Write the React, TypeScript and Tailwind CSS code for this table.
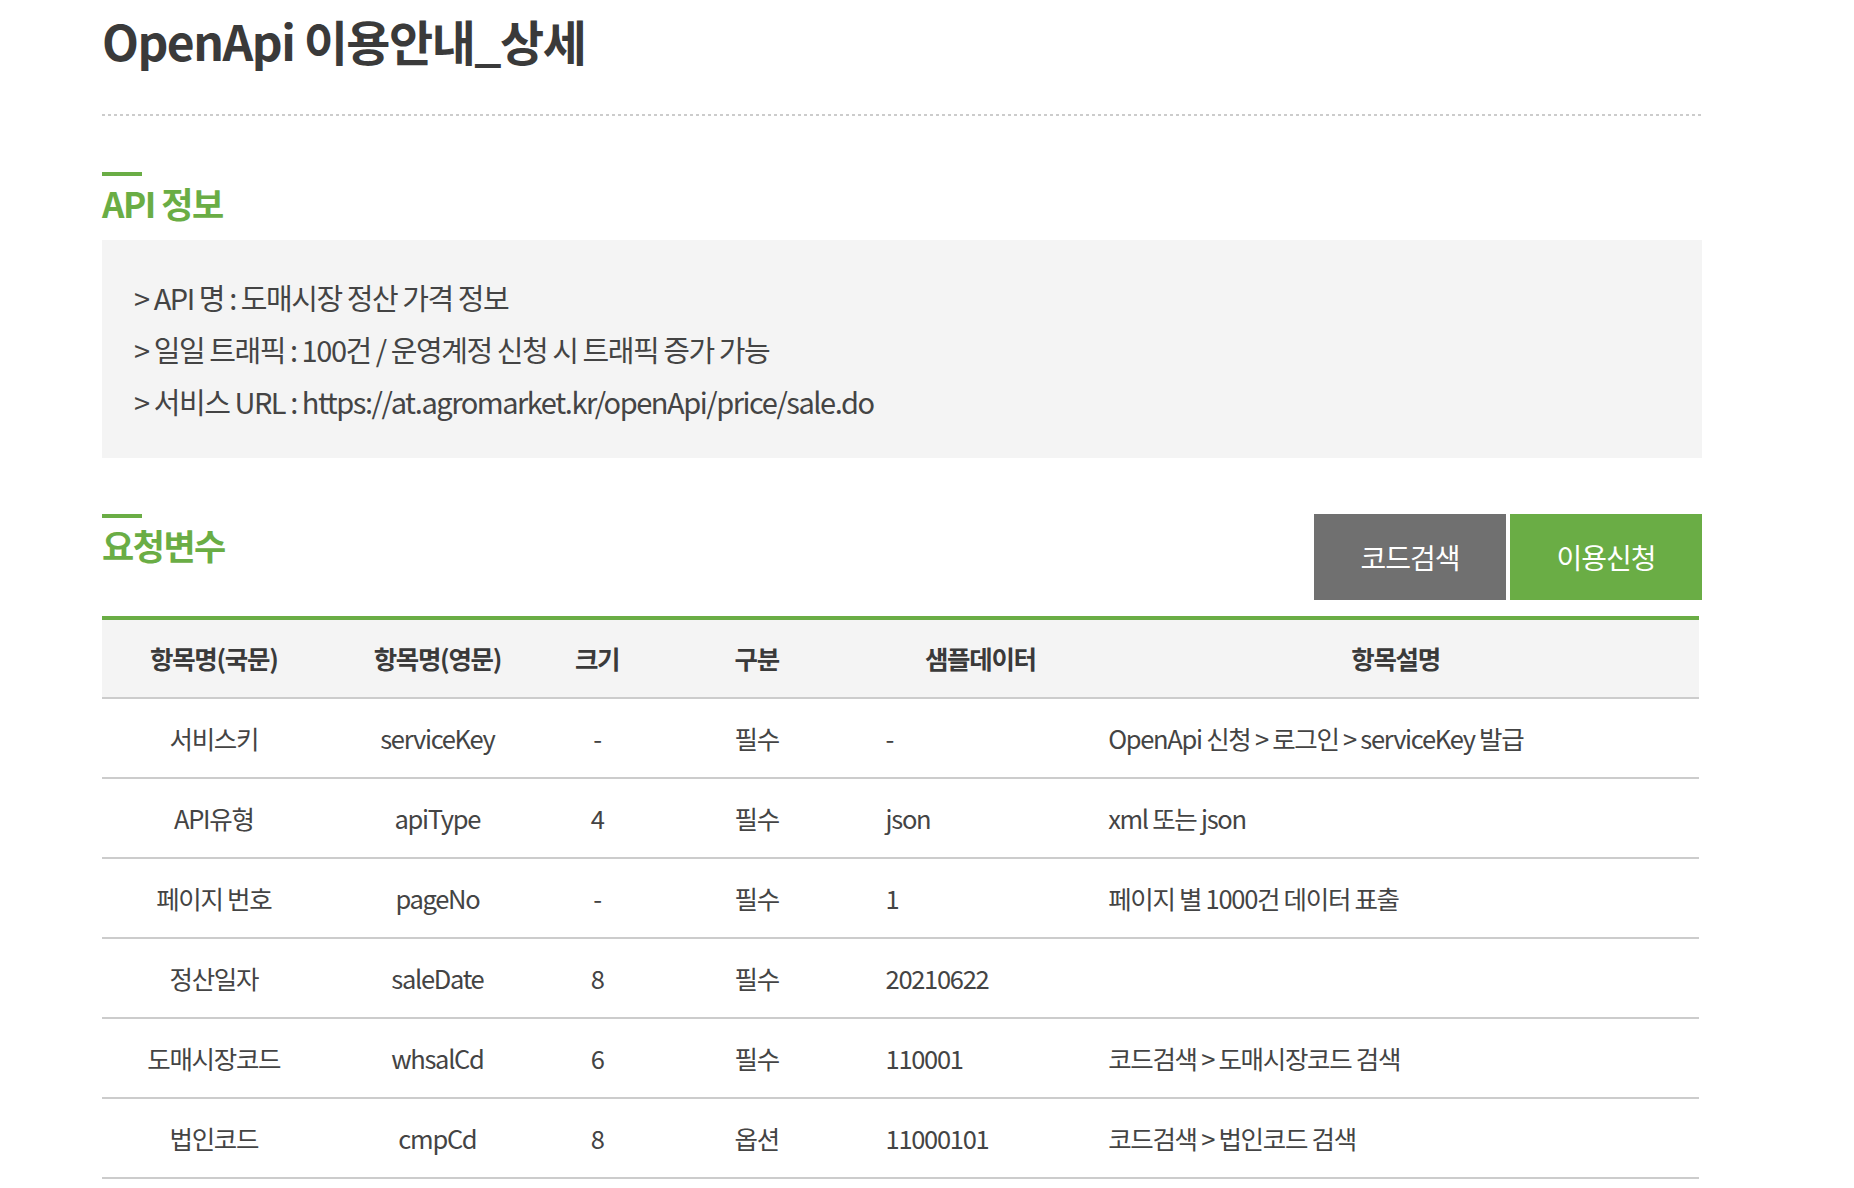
import React from "react";

const rows = [
  ["서비스키", "serviceKey", "-", "필수", "-", "OpenApi 신청 > 로그인 > serviceKey 발급"],
  ["API유형", "apiType", "4", "필수", "json", "xml 또는 json"],
  ["페이지 번호", "pageNo", "-", "필수", "1", "페이지 별 1000건 데이터 표출"],
  ["정산일자", "saleDate", "8", "필수", "20210622", ""],
  ["도매시장코드", "whsalCd", "6", "필수", "110001", "코드검색 > 도매시장코드 검색"],
  ["법인코드", "cmpCd", "8", "옵션", "11000101", "코드검색 > 법인코드 검색"],
];

function SectionTitle({ children }: { children: React.ReactNode }) {
  return (
    <div>
      <div className="w-[40px] h-[4px] bg-[#6aad45]" />
      <h3 className="mt-[7px] text-[35px] leading-[40px] font-bold text-[#6aad45] tracking-[-1.5px]">{children}</h3>
    </div>
  );
}

export default function App() {
  return (
    <div
      className="min-h-[1188px] bg-white text-[#333]"
      style={{ fontFamily: '"Noto Sans CJK KR", "Noto Sans", sans-serif' }}
    >
      <div className="ml-[102px] w-[1600px]">
        <div className="pt-[10px] pb-[44px]">
          <h2 className="text-[48px] leading-[60px] font-bold text-[#3a3a3a] tracking-[-1.5px]">OpenApi 이용안내_상세</h2>
        </div>
        <div className="h-[2px] bg-[linear-gradient(to_right,#cccccc_3px,transparent_3px)] bg-[length:6px_2px]" />

        <div className="mt-[56px]">
          <SectionTitle>API 정보</SectionTitle>
        </div>
        <div className="mt-[17px] bg-[#f4f4f4] h-[218px] pl-[32px] pt-[31px] text-[29px] leading-[52px] text-[#444] tracking-[-1.45px]">
          <p>&gt; API 명 : 도매시장 정산 가격 정보</p>
          <p>&gt; 일일 트래픽 : 100건 / 운영계정 신청 시 트래픽 증가 가능</p>
          <p>&gt; 서비스 URL : https://at.agromarket.kr/openApi/price/sale.do</p>
        </div>

        <div className="mt-[56px] flex justify-between items-start">
          <SectionTitle>요청변수</SectionTitle>
          <div className="flex gap-[4px]">
            <button className="w-[192px] h-[86px] bg-[#707070] text-white text-[28px] tracking-[-1px]">코드검색</button>
            <button className="w-[192px] h-[86px] bg-[#6aad45] text-white text-[28px] tracking-[-1px]">이용신청</button>
          </div>
        </div>

        <table className="mt-[16px] w-[1597px] border-t-[4px] border-[#6aad45] table-fixed border-collapse">
          <colgroup>
            <col className="w-[14%]" />
            <col className="w-[14%]" />
            <col className="w-[6%]" />
            <col className="w-[14%]" />
            <col className="w-[14%]" />
            <col />
          </colgroup>
          <thead>
            <tr className="bg-[#f4f4f4] h-[80px] border-b-2 border-[#cccccc]">
              {["항목명(국문)", "항목명(영문)", "크기", "구분", "샘플데이터", "항목설명"].map((h) => (
                <th key={h} className="text-[25.5px] font-bold text-[#3a3a3a] text-center tracking-[-1.3px]">
                  {h}
                </th>
              ))}
            </tr>
          </thead>
          <tbody>
            {rows.map((r, i) => (
              <tr key={i} className="h-[80px] border-b-2 border-[#cccccc] text-[25.5px] text-[#444] tracking-[-1.3px]">
                <td className="text-center">{r[0]}</td>
                <td className="text-center">{r[1]}</td>
                <td className="text-center">{r[2]}</td>
                <td className="text-center">{r[3]}</td>
                <td className="text-left pl-[17px]">{r[4]}</td>
                <td className="text-left pl-[16px]">{r[5]}</td>
              </tr>
            ))}
          </tbody>
        </table>
      </div>
    </div>
  );
}
